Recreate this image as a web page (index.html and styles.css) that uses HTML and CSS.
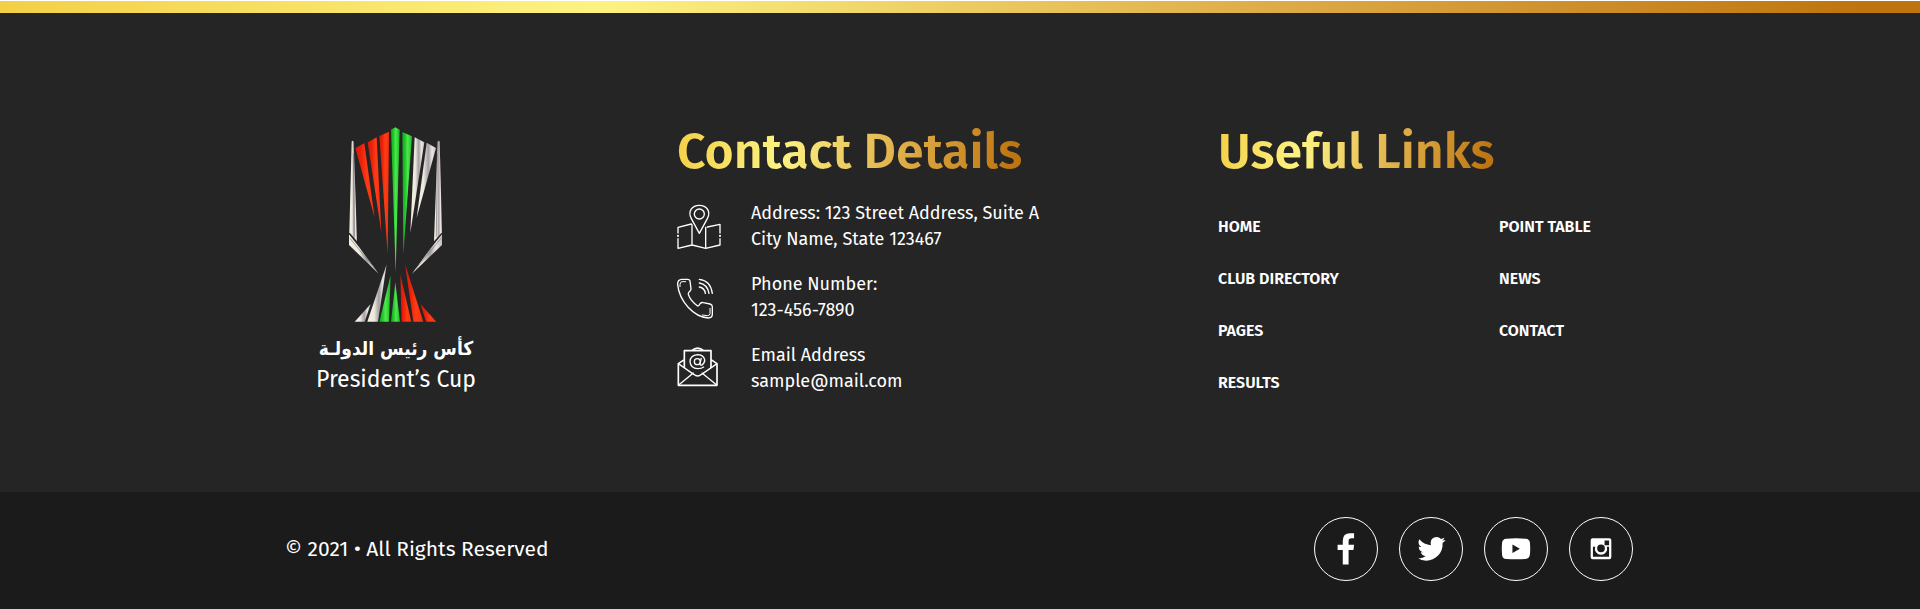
FILE: index.html
```html
<!DOCTYPE html>
<html lang="en">
<head>
<meta charset="utf-8">
<title>President's Cup</title>
<link rel="stylesheet" href="styles.css">
</head>
<body>
<footer class="footer">
  <div class="accent"></div>
  <div class="main">
    <div class="container columns">
      <a class="brand" href="#">
        <svg class="trophy" viewBox="144 51 285 585" aria-hidden="true">
          <defs>
            <linearGradient id="red"><stop offset="0" stop-color="#d41c08"/><stop offset=".3" stop-color="#ea200a"/><stop offset=".6" stop-color="#ff3c14"/><stop offset="1" stop-color="#f4300e"/></linearGradient>
            <linearGradient id="green"><stop offset="0" stop-color="#0fa81a"/><stop offset=".3" stop-color="#22c82a"/><stop offset=".55" stop-color="#4dea4d"/><stop offset="1" stop-color="#1cb424"/></linearGradient>
            <linearGradient id="silver"><stop offset="0" stop-color="#f3f0e2"/><stop offset=".35" stop-color="#eeeade"/><stop offset=".6" stop-color="#a59ea2"/><stop offset=".8" stop-color="#e9e5e6"/><stop offset="1" stop-color="#c4bdc0"/></linearGradient>
          </defs>
          <g fill="url(#silver)">
            <path d="M155 95q3-5 6 0L171 394L148 367z"/>
            <path d="M413 95q3-5 6 0L426 367L402 394z"/>
            <path d="M147 373L180 415L236 491L147 405z"/>
            <path d="M426 373L392 415L336 491L426 405z"/>
            <path d="M344 82L373 97L331 368z"/>
            <path d="M380 98L408 114L350 323z"/>
            <path d="M212 582L194 635H164z"/>
            <path d="M260 463L234 635H202z"/>
          </g>
          <g fill="url(#red)">
            <path d="M166 114L193 100L224 323z"/>
            <path d="M203 97L230 82L244 366z"/>
            <path d="M238 78L267 65L263 432z"/>
            <path d="M301 494L334 635H305z"/>
            <path d="M315 462L370 635H340z"/>
            <path d="M362 583L409 635H378z"/>
          </g>
          <g fill="url(#green)">
            <path d="M273 59L286 52L299 59L287 486z"/>
            <path d="M307 66L336 79L310 432z"/>
            <path d="M272 495L267 635H238z"/>
            <path d="M286 517L300 635H273z"/>
          </g>
          <g fill="none" stroke="#81777d" stroke-width="3" opacity=".7">
            <path d="M160 130L163 380M412 130L409 380M150 385L225 477M423 385L347 477"/>
          </g>
        </svg>
        <span class="brand-ar" lang="ar" dir="rtl">كأس رئيس الدولـة</span>
        <span class="brand-en">President’s Cup</span>
      </a>
      <section class="contact">
        <h2 class="title">Contact Details</h2>
        <address class="details">
          <div class="detail">
            <svg class="icon" viewBox="0 0 132 138" aria-hidden="true">
              <g fill="none" stroke="#fff" stroke-width="4" stroke-linejoin="round" stroke-linecap="round">
                <path d="M67 91L43 47C31 24 46 7 67 7S103 24 91 47z"/>
                <circle cx="67" cy="33" r="15"/>
                <path d="M43 63L3 73V90M3 107V136L45 126L86 136L129 126V107M129 90V64L91 72M45 65V126M86 73V136"/>
                <path d="M3 98V99M129 98V99" stroke-width="6"/>
              </g>
            </svg>
            <p class="lines">Address: 123 Street Address, Suite A<br>City Name, State 123467</p>
          </div>
          <div class="detail">
            <svg class="icon" viewBox="0 0 132 138" aria-hidden="true">
              <g fill="none" stroke="#fff" stroke-width="4" stroke-linejoin="round" stroke-linecap="round">
                <path d="M14 16H32Q38 16 39 21L42 45Q42 48 39 51Q33 56 34 61Q40 80 62 96Q66 96 69 89Q74 84 79 86L99 90Q106 92 106 98V121Q106 132 94 132C50 129 7 82 2 32Q1 17 14 16z"/>
                <path d="M26 23H15Q9 23 9 32V38M76 123L91 125Q99 125 99 119V103" stroke-width="3"/>
                <path d="M67 16Q101 20 106 58M67 27Q91 31 96 58M67 39Q83 42 85 58"/>
              </g>
            </svg>
            <p class="lines">Phone Number:<br><a href="tel:1234567890">123-456-7890</a></p>
          </div>
          <div class="detail">
            <svg class="icon" viewBox="0 0 132 138" aria-hidden="true">
              <g fill="none" stroke="#fff" stroke-width="4" stroke-linejoin="round">
                <path d="M22 44L4 56V121H120V56L102 44M22 69V17H102V69M44 17Q62 2 80 17" stroke-width="5"/>
                <path d="M4 56L50 88Q62 98 74 88L120 56M4 121L50 83M120 121L74 83"/>
                <circle cx="61" cy="50" r="9"/>
                <path d="M73 39L69 55Q69 62 75 60Q84 54 83 44Q79 29 61 29Q40 31 39 50Q41 70 62 71Q74 71 81 65"/>
              </g>
            </svg>
            <p class="lines">Email Address<br><a href="mailto:sample@mail.com">sample@mail.com</a></p>
          </div>
        </address>
      </section>
      <nav class="links" aria-labelledby="links-title">
        <h2 class="title" id="links-title">Useful Links</h2>
        <div class="link-columns">
          <ul class="list">
            <li><a href="#">HOME</a></li>
            <li><a href="#">CLUB DIRECTORY</a></li>
            <li><a href="#">PAGES</a></li>
            <li><a href="#">RESULTS</a></li>
          </ul>
          <ul class="list">
            <li><a href="#">POINT TABLE</a></li>
            <li><a href="#">NEWS</a></li>
            <li><a href="#">CONTACT</a></li>
          </ul>
        </div>
      </nav>
    </div>
  </div>
  <div class="bottom">
    <div class="container bar">
      <p class="copyright">© 2021 • All Rights Reserved</p>
      <div class="social">
        <a class="circle" href="#" aria-label="Facebook">
          <svg viewBox="0 0 192 192" aria-hidden="true"><path fill="#fff" d="M86 144V99H70V83H86V70Q86 47 109 47H121V63H113Q104 63 104 71V83H121L119 99H104V144z"/></svg>
        </a>
        <a class="circle" href="#" aria-label="Twitter">
          <svg viewBox="0 0 192 192" aria-hidden="true"><path fill="#fff" d="M141 68Q137 74 132 77C134 109 110 132 81 132Q67 132 55 125Q70 126 80 118Q68 117 64 106H72Q58 102 58 88Q62 90 66 90C56 83 56 73 60 66Q74 83 96 84C92 68 102 59 114 59Q121 59 127 65L138 61Q136 66 131 70z"/></svg>
        </a>
        <a class="circle" href="#" aria-label="YouTube">
          <svg viewBox="0 0 192 192" aria-hidden="true"><path fill="#fff" fill-rule="evenodd" d="M66 64Q96 61 126 64Q138 65 139 76Q141 95 139 114Q137 126 126 127Q96 129 66 127Q54 126 53 115Q51 95 53 76Q54 65 66 64zM85 82V108L108 95z"/></svg>
        </a>
        <a class="circle" href="#" aria-label="Instagram">
          <svg viewBox="0 0 192 192" aria-hidden="true"><path fill="#fff" fill-rule="evenodd" d="M70 63H122Q128 63 128 69V121Q128 128 122 128H70Q64 128 64 121V69Q64 63 70 63zM107 70V84H121V70zM71 89V120H121V89H114A19 19 0 1 1 78 89zM96 82A12 12 0 1 0 96 106A12 12 0 1 0 96 82z"/></svg>
        </a>
      </div>
    </div>
  </div>
</footer>
</body>
</html>
```
FILE: styles.css
```css
* {
  box-sizing: border-box;
}

body {
  margin: 0;
  background: #1b1b1b;
  color: #fff;
  font-family: "Fira Sans", "Noto Sans", sans-serif;
}

h2,
p,
ul {
  margin: 0;
  padding: 0;
}

a {
  color: inherit;
  text-decoration: none;
}

.accent {
  height: 13px;
  border-top: 1px solid #fff;
  background: linear-gradient(100deg, #f3cf47 0%, #fdf382 31%, #dfae49 65%, #be7410 97%);
}

.main {
  padding: 113px 24px 97px;
  background: #252525;
}

.container {
  max-width: 1350px;
  margin: 0 auto;
}

.columns {
  display: grid;
  grid-template-columns: 392fr 541fr 417fr;
}

.brand {
  display: flex;
  flex-direction: column;
  align-items: center;
  justify-self: start;
  padding: 1px 0 0 31px;
}

.trophy {
  width: 95px;
  height: 195px;
}

.brand-ar {
  margin-top: 9px;
  font: bold 19px/34px "DejaVu Sans Condensed", "DejaVu Sans", sans-serif;
  white-space: nowrap;
}

.brand-en {
  font-size: 23px;
  line-height: 28px;
  white-space: nowrap;
}

.title {
  width: fit-content;
  background: linear-gradient(100deg, #f3cf47 0%, #fdf382 31%, #dfae49 65%, #be7410 97%);
  background-clip: text;
  color: transparent;
  font-size: 50px;
  font-weight: 600;
  line-height: 50px;
  white-space: nowrap;
}

.details {
  display: grid;
  gap: 19px;
  margin-top: 24px;
  font-style: normal;
}

.detail {
  display: flex;
  align-items: center;
  gap: 30px;
}

.icon {
  width: 44px;
  height: 46px;
}

.lines {
  font-size: 18px;
  line-height: 26px;
}

.link-columns {
  display: grid;
  grid-template-columns: 281fr 136fr;
  margin-top: 39px;
}

.list {
  display: grid;
  align-content: start;
  gap: 28px;
  list-style: none;
  font-size: 16px;
  font-weight: 600;
  line-height: 24px;
}

.bottom {
  padding: 25px 24px;
  background: #1b1b1b;
}

.bar {
  display: flex;
  align-items: center;
  justify-content: space-between;
}

.copyright {
  font-size: 21px;
  line-height: 28px;
}

.social {
  display: flex;
  gap: 21px;
  padding-right: 2px;
}

.circle {
  width: 64px;
  height: 64px;
  border: 1px solid #fff;
  border-radius: 50%;
}

.circle svg {
  display: block;
}
```
